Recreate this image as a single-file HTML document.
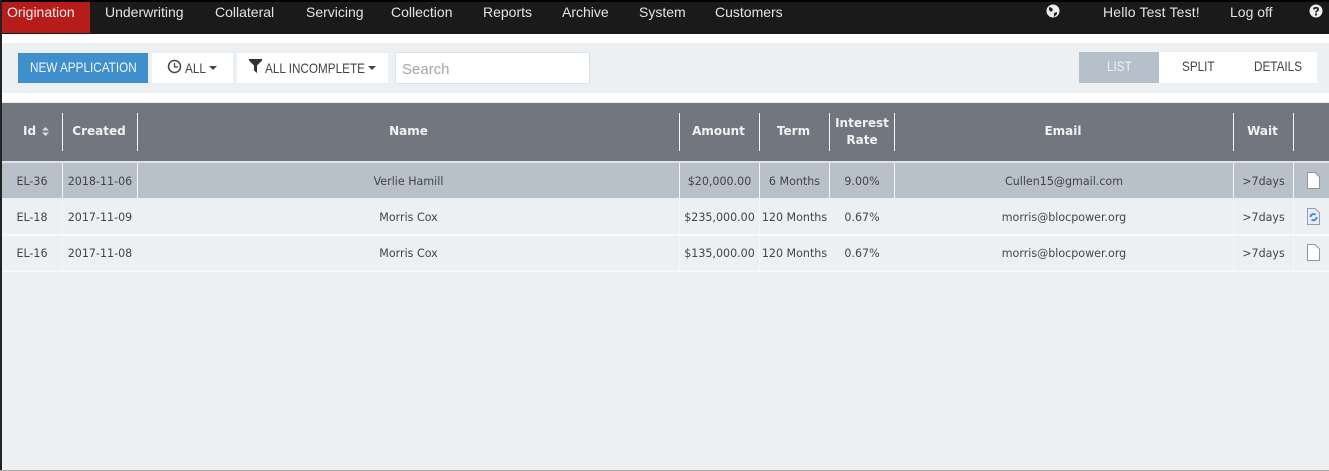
<!DOCTYPE html>
<html><head><meta charset="utf-8"><style>
html,body{margin:0;padding:0;width:1329px;height:471px;overflow:hidden;background:#ecf0f2}
div,span,svg{position:absolute;white-space:nowrap}
.n{top:4px;font:14px/17px "Liberation Sans",sans-serif;color:#e4e4e4}
.b{font:14px/16px "Liberation Sans",sans-serif;color:#444;transform-origin:0 50%;transform:scaleX(.838)}
.th{top:123px;text-align:center;font:bold 12px/17px "DejaVu Sans",sans-serif;color:#f0f1f2}
.td{text-align:center;font:11.1px/14px "DejaVu Sans",sans-serif;color:#444}
.v{width:1px;background:#f4f6f7}
.h{left:2px;width:1327px;height:2px;background:#f6f8f9}
</style></head><body>
<div style="left:0;top:0;width:1329px;height:34px;background:#1a1a1a"></div>
<div style="left:0;top:0;width:1329px;height:2px;background:#000"></div>
<div style="left:2px;top:2px;width:88px;height:31px;background:#b61c1a"></div>
<div class="n" style="left:7px;color:#eee">Origination</div>
<div class="n" style="left:105px">Underwriting</div>
<div class="n" style="left:215px">Collateral</div>
<div class="n" style="left:306px">Servicing</div>
<div class="n" style="left:391px">Collection</div>
<div class="n" style="left:483px">Reports</div>
<div class="n" style="left:562px">Archive</div>
<div class="n" style="left:639px">System</div>
<div class="n" style="left:715px">Customers</div>
<div class="n" style="left:1103px;letter-spacing:.15px">Hello Test Test!</div>
<div class="n" style="left:1230px">Log off</div>
<svg style="left:1046px;top:4px" width="14" height="14" viewBox="0 0 14 14"><circle cx="7" cy="7" r="6.5" fill="#eee"/><path d="M3 3l3 1 1 2-2 2-2-2zM8 9l3-1 0 2-3 3z" fill="#222"/></svg>
<svg style="left:1309px;top:4px" width="14" height="14" viewBox="0 0 14 14"><circle cx="7" cy="7" r="6.5" fill="#eee"/><path d="M4.8 5.4C5 3.2 9.2 3.2 9.2 5.4 9.2 6.9 7 6.900 7 8.500" fill="none" stroke="#222" stroke-width="1.700"/><rect x="6" y="9.500" width="2" height="2" fill="#222"/></svg>

<div style="left:2px;top:34px;width:1327px;height:9px;background:#fff"></div>
<div style="left:2px;top:93px;width:1327px;height:9px;background:#fff"></div>
<div style="left:0;top:0;width:2px;height:471px;background:#222"></div>

<div style="left:18px;top:53px;width:130px;height:30px;background:#3f8fcd"></div>
<div class="b" style="left:30px;top:59px;color:#f2f7fb">NEW APPLICATION</div>
<div style="left:152px;top:53px;width:81px;height:30px;background:#fff"></div>
<svg style="left:167px;top:59px" width="15" height="15" viewBox="0 0 15 15"><circle cx="7.500" cy="7.500" r="6" fill="none" stroke="#444" stroke-width="1.500"/><path d="M7.500 4v4H11" fill="none" stroke="#444" stroke-width="1.300"/></svg>
<div class="b" style="left:185px;top:60px">ALL</div>
<svg style="left:209px;top:66px" width="8" height="4"><path d="M0 0h8L4 4z" fill="#444"/></svg>
<div style="left:237px;top:53px;width:151px;height:30px;background:#fff"></div>
<svg style="left:249px;top:59px" width="13" height="14" viewBox="0 0 13 14"><path d="M0 0h13v1.500L8 6.500V14L5 11.500V6.500L0 1.500z" fill="#333"/></svg>
<div class="b" style="left:265px;top:60px">ALL INCOMPLETE</div>
<svg style="left:368px;top:66px" width="8" height="4"><path d="M0 0h8L4 4z" fill="#444"/></svg>
<div style="left:395px;top:52px;width:193px;height:30px;background:#fff;border:1px solid #dde2e6"></div>
<div style="left:402px;top:61px;font:15px/18px 'Liberation Sans',sans-serif;color:#a3a6a9">Search</div>

<div style="left:1079px;top:52px;width:80px;height:31px;background:#b6c0ca"></div>
<div style="left:1159px;top:52px;width:158px;height:31px;background:#fff"></div>
<div class="b" style="left:1107px;top:58px;color:#eef1f4">LIST</div>
<div class="b" style="left:1182px;top:58px">SPLIT</div>
<div class="b" style="left:1254px;top:58px">DETAILS</div>

<div style="left:2px;top:103px;width:1327px;height:58px;background:#72777f"></div>
<div style="left:2px;top:161px;width:1327px;height:2px;background:#dfe3e6"></div>
<div style="left:2px;top:163px;width:1327px;height:35px;background:#b8c1ca"></div>
<div class="h" style="top:234px"></div>
<div class="h" style="top:270px"></div>

<div class="v" style="left:62px;top:113px;height:38px"></div>
<div class="v" style="left:137px;top:113px;height:38px"></div>
<div class="v" style="left:679px;top:113px;height:38px"></div>
<div class="v" style="left:759px;top:113px;height:38px"></div>
<div class="v" style="left:829px;top:113px;height:38px"></div>
<div class="v" style="left:894px;top:113px;height:38px"></div>
<div class="v" style="left:1233px;top:113px;height:38px"></div>
<div class="v" style="left:1293px;top:113px;height:38px"></div>

<div class="v" style="left:62px;top:163px;height:107px"></div>
<div class="v" style="left:137px;top:163px;height:35px"></div>
<div class="v" style="left:679px;top:163px;height:107px"></div>
<div class="v" style="left:759px;top:163px;height:107px"></div>
<div class="v" style="left:829px;top:163px;height:35px"></div>
<div class="v" style="left:894px;top:163px;height:35px"></div>
<div class="v" style="left:1233px;top:163px;height:107px"></div>
<div class="v" style="left:1293px;top:163px;height:107px"></div>

<div class="th" style="left:23px">Id</div>
<svg style="left:42px;top:127px" width="7" height="9"><path d="M3.500 0L7 3.500H0zM0 5.500h7L3.500 9z" fill="#d8dadd"/></svg>
<div class="th" style="left:62px;width:74px">Created</div>
<div class="th" style="left:138px;width:541px">Name</div>
<div class="th" style="left:679px;width:79px">Amount</div>
<div class="th" style="left:759px;width:69px">Term</div>
<div class="th" style="left:830px;width:64px;top:115px">Interest<br>Rate</div>
<div class="th" style="left:894px;width:338px">Email</div>
<div class="th" style="left:1233px;width:59px">Wait</div>

<div class="td" style="left:2px;width:60px;top:175px">EL-36</div>
<div class="td" style="left:63px;width:74px;top:175px">2018-11-06</div>
<div class="td" style="left:138px;width:541px;top:175px">Verlie Hamill</div>
<div class="td" style="left:680px;width:79px;top:175px">$20,000.00</div>
<div class="td" style="left:760px;width:69px;top:175px">6 Months</div>
<div class="td" style="left:830px;width:64px;top:175px">9.00%</div>
<div class="td" style="left:895px;width:338px;top:175px">Cullen15@gmail.com</div>
<div class="td" style="left:1234px;width:59px;top:175px">&gt;7days</div>

<div class="td" style="left:2px;width:60px;top:211px">EL-18</div>
<div class="td" style="left:63px;width:74px;top:211px">2017-11-09</div>
<div class="td" style="left:138px;width:541px;top:211px">Morris Cox</div>
<div class="td" style="left:680px;width:79px;top:211px">$235,000.00</div>
<div class="td" style="left:760px;width:69px;top:211px">120 Months</div>
<div class="td" style="left:830px;width:64px;top:211px">0.67%</div>
<div class="td" style="left:895px;width:338px;top:211px">morris@blocpower.org</div>
<div class="td" style="left:1234px;width:59px;top:211px">&gt;7days</div>

<div class="td" style="left:2px;width:60px;top:247px">EL-16</div>
<div class="td" style="left:63px;width:74px;top:247px">2017-11-08</div>
<div class="td" style="left:138px;width:541px;top:247px">Morris Cox</div>
<div class="td" style="left:680px;width:79px;top:247px">$135,000.00</div>
<div class="td" style="left:760px;width:69px;top:247px">120 Months</div>
<div class="td" style="left:830px;width:64px;top:247px">0.67%</div>
<div class="td" style="left:895px;width:338px;top:247px">morris@blocpower.org</div>
<div class="td" style="left:1234px;width:59px;top:247px">&gt;7days</div>

<svg style="left:1307px;top:172px" width="13" height="17" viewBox="0 0 13 17"><path d="M.5.500H8L12.500 5V16.500H.5z" fill="#fff" stroke="#8e98a3"/></svg>
<svg style="left:1307px;top:208px" width="13" height="17" viewBox="0 0 13 17"><path d="M.5.500H8L12.500 5V16.500H.5z" fill="#e6edf4" stroke="#8e9fb3"/><path d="M3.500 9a3 3 0 0 1 5-2.200M9.500 9a3 3 0 0 1-5 2.500" fill="none" stroke="#3d84c6" stroke-width="1.800"/></svg>
<svg style="left:1307px;top:244px" width="13" height="17" viewBox="0 0 13 17"><path d="M.5.500H8L12.500 5V16.500H.5z" fill="#fff" stroke="#8e98a3"/></svg>

<div style="left:0;top:470px;width:1329px;height:1px;background:#a8a8a8"></div>
</body></html>
